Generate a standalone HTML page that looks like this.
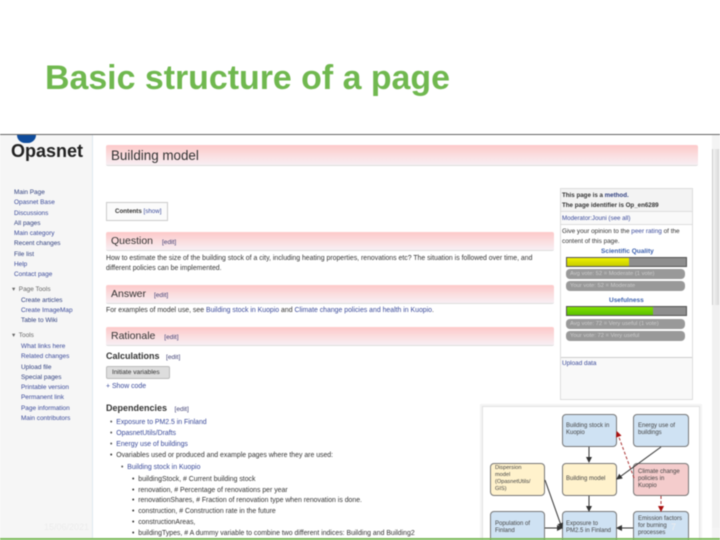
<!DOCTYPE html>
<html><head><meta charset="utf-8"><style>
html,body{margin:0;padding:0;background:#fff;}
#p{position:relative;width:720px;height:540px;overflow:hidden;background:#fff;font-family:"Liberation Sans",sans-serif;}
#p div,#p svg{position:absolute;}
#c{left:0;top:0;width:720px;height:540px;filter:blur(.4px);}
.t{white-space:nowrap;font-size:6.9px;line-height:9px;color:#333;}
.n{font-size:6.45px;}
.l{color:#3a4a9a;}
.s{color:#2f3f7f;}
.h{left:106px;width:448px;height:18px;background:linear-gradient(#fdc9c9,#f8f0f4);border-radius:2px;border-bottom:1px solid #ddd;}
.h2{font-size:10.5px;line-height:12px;color:#333;}
.e{font-size:6.6px;color:#447;margin-left:5px;}
.b{background:#cfe2f3;border:1px solid #777;border-radius:4px;box-sizing:border-box;}
.y{background:#fff2cc;}
.r{background:#f4cccc;}
.d{font-size:6px;line-height:7px;color:#444;white-space:nowrap;}
.pl{background:#999;border-radius:4px;height:10px;left:566px;width:119px;color:#ccc;font-size:5.8px;line-height:10px;text-indent:4px;white-space:nowrap;}
</style></head><body><div id="p"><div id="c">
<div style="left:45px;top:58px;font-size:33.9px;font-weight:bold;line-height:40px;color:#70b84f;white-space:nowrap;">Basic structure of a page</div>

<div style="left:0;top:134px;width:720px;height:1px;background:#666;"></div>
<div style="left:0;top:135px;width:92px;height:403px;background:#f6f6f6;border-right:1px solid #dfe8f0;"></div>
<div style="left:17px;top:135px;width:19px;height:8px;background:#0f4c9c;border-radius:0 0 10px 10px;"></div>
<div style="left:11px;top:141px;font-size:18px;line-height:20px;font-weight:bold;color:#222;white-space:nowrap;">Opasnet</div>

<div class="t n s" style="left:14px;top:188px;">Main Page</div>
<div class="t n l" style="left:14px;top:198px;">Opasnet Base</div>
<div class="t n l" style="left:14px;top:209px;">Discussions</div>
<div class="t n s" style="left:14px;top:219px;">All pages</div>
<div class="t n l" style="left:14px;top:229px;">Main category</div>
<div class="t n s" style="left:14px;top:239px;">Recent changes</div>
<div class="t n s" style="left:14px;top:250px;">File list</div>
<div class="t n l" style="left:14px;top:260px;">Help</div>
<div class="t n l" style="left:14px;top:270px;">Contact page</div>
<div class="t n" style="left:12px;top:285px;color:#666;">&#9662; &nbsp;Page Tools</div>
<div class="t n s" style="left:21px;top:296px;">Create articles</div>
<div class="t n l" style="left:21px;top:306px;">Create ImageMap</div>
<div class="t n s" style="left:21px;top:316px;">Table to Wiki</div>
<div class="t n" style="left:12px;top:331px;color:#666;">&#9662; &nbsp;Tools</div>
<div class="t n l" style="left:21px;top:342px;">What links here</div>
<div class="t n l" style="left:21px;top:352px;">Related changes</div>
<div class="t n s" style="left:21px;top:363px;">Upload file</div>
<div class="t n s" style="left:21px;top:373px;">Special pages</div>
<div class="t n l" style="left:21px;top:383px;">Printable version</div>
<div class="t n l" style="left:21px;top:393px;">Permanent link</div>
<div class="t n l" style="left:21px;top:404px;">Page information</div>
<div class="t n l" style="left:21px;top:414px;">Main contributors</div>
<div class="t" style="left:44px;top:523px;font-size:9px;color:#ececec;">15/06/2021</div>

<div class="h" style="top:145px;width:592px;height:20px;"></div>
<div class="t" style="left:111px;top:148px;font-size:13.4px;line-height:15px;color:#333;">Building model</div>

<div style="left:106px;top:202px;width:60px;height:17px;border:1px solid #ccc;background:#fbfbfb;"></div>
<div class="t" style="left:115px;top:207px;font-size:6.2px;"><b>Contents</b> <span class="l">[show]</span></div>

<div class="h" style="top:232px;"></div>
<div class="t h2" style="left:111px;top:235px;">Question <span class="e" style="margin-left:6px;">[edit]</span></div>
<div class="t" style="left:106px;top:254px;">How to estimate the size of the building stock of a city, including heating properties, renovations etc? The situation is followed over time, and</div>
<div class="t" style="left:106px;top:264px;">different policies can be implemented.</div>

<div class="h" style="top:285px;"></div>
<div class="t h2" style="left:111px;top:288px;">Answer <span class="e" style="margin-left:5px;">[edit]</span></div>
<div class="t" style="left:106px;top:306px;">For examples of model use, see <span class="l">Building stock in Kuopio</span> and <span class="l">Climate change policies and health in Kuopio</span>.</div>

<div class="h" style="top:327px;"></div>
<div class="t h2" style="left:111px;top:330px;">Rationale <span class="e" style="margin-left:6px;">[edit]</span></div>

<div class="t" style="left:106px;top:351px;font-size:9px;line-height:11px;font-weight:bold;">Calculations <span class="e" style="font-weight:normal;margin-left:4px;">[edit]</span></div>
<div style="left:106px;top:366px;width:62px;height:11px;background:#ddd;border:1px solid #bbb;border-radius:2px;"></div>
<div class="t" style="left:112px;top:368px;font-size:6.6px;">Initiate variables</div>
<div class="t l" style="left:106px;top:382px;">+ Show code</div>

<div class="t" style="left:106px;top:403px;font-size:9px;line-height:11px;font-weight:bold;">Dependencies <span class="e" style="font-weight:normal;margin-left:5px;">[edit]</span></div>
<div class="t l" style="left:110px;top:418px;"><span style="color:#555">&#8226;</span>&nbsp;&nbsp;Exposure to PM2.5 in Finland</div>
<div class="t l" style="left:110px;top:429px;"><span style="color:#555">&#8226;</span>&nbsp;&nbsp;OpasnetUtils/Drafts</div>
<div class="t l" style="left:110px;top:440px;"><span style="color:#555">&#8226;</span>&nbsp;&nbsp;Energy use of buildings</div>
<div class="t" style="left:110px;top:451px;">&#8226;&nbsp;&nbsp;Ovariables used or produced and example pages where they are used:</div>
<div class="t l" style="left:121px;top:463px;"><span style="color:#555">&#8226;</span>&nbsp;&nbsp;Building stock in Kuopio</div>
<div class="t" style="left:132px;top:475px;">&#8226;&nbsp;&nbsp;buildingStock, # Current building stock</div>
<div class="t" style="left:132px;top:486px;">&#8226;&nbsp;&nbsp;renovation, # Percentage of renovations per year</div>
<div class="t" style="left:132px;top:496px;">&#8226;&nbsp;&nbsp;renovationShares, # Fraction of renovation type when renovation is done.</div>
<div class="t" style="left:132px;top:507px;">&#8226;&nbsp;&nbsp;construction, # Construction rate in the future</div>
<div class="t" style="left:132px;top:518px;">&#8226;&nbsp;&nbsp;constructionAreas,</div>
<div class="t" style="left:132px;top:529px;">&#8226;&nbsp;&nbsp;buildingTypes, # A dummy variable to combine two different indices: Building and Building2</div>

<!-- infobox -->
<div style="left:560px;top:188px;width:131px;height:210px;background:#f9f9f9;border:1px solid #ddd;"></div>
<div style="left:561px;top:189px;width:131px;height:22px;background:#f3f3f3;border-bottom:1px solid #ddd;"></div>
<div style="left:561px;top:224px;width:131px;height:133px;background:#fff;border-top:1px solid #ddd;"></div>
<div style="left:561px;top:357px;width:131px;height:1px;background:#ccc;"></div>
<div class="t" style="left:562px;top:191px;font-size:6.2px;font-weight:bold;line-height:10px;">This page is a <span class="s">method.</span><br>The page identifier is Op_en6289</div>
<div class="t l" style="left:562px;top:214px;font-size:6.2px;">Moderator:Jouni (see all)</div>
<div class="t" style="left:562px;top:227px;font-size:6.4px;line-height:10px;">Give your opinion to the <span class="l">peer rating</span> of the<br>content of this page.</div>
<div class="t" style="left:601px;top:247px;font-size:6.5px;font-weight:bold;color:#3a5fae;">Scientific Quality</div>
<div style="left:566px;top:257px;width:119px;height:8px;background:#8e8e8e;border:1px solid #555;"></div>
<div style="left:567px;top:258px;width:62px;height:8px;background:linear-gradient(#eef200,#c8cc00);"></div>
<div class="pl" style="top:269px;">Avg vote: 52 = Moderate (1 vote)</div>
<div class="pl" style="top:281px;">Your vote: 52 = Moderate</div>
<div class="t" style="left:609px;top:296px;font-size:6.5px;font-weight:bold;color:#3a5fae;">Usefulness</div>
<div style="left:566px;top:306px;width:119px;height:8px;background:#8e8e8e;border:1px solid #555;"></div>
<div style="left:567px;top:307px;width:86px;height:8px;background:linear-gradient(#7fe000,#5cc000);"></div>
<div class="pl" style="top:319px;">Avg vote: 72 = Very useful (1 vote)</div>
<div class="pl" style="top:331px;">Your vote: 72 = Very useful</div>
<div class="t l" style="left:562px;top:359px;font-size:6.4px;">Upload data</div>

<!-- scrollbar -->
<div style="left:712px;top:135px;width:8px;height:405px;background:#f1f1f1;"></div>
<div style="left:712px;top:149px;width:7px;height:156px;background:linear-gradient(90deg,#f4f4f4,#d8d8d8);border-left:1px solid #ccc;box-sizing:border-box;"></div>
<div style="left:712px;top:135px;width:8px;height:14px;background:#f4f4f4;"></div>
<div style="left:712px;top:528px;width:8px;height:10px;background:#f4f4f4;"></div>

<!-- diagram -->
<div style="left:482px;top:406px;width:216px;height:134px;background:#fff;border:1px solid #e2e2e2;box-shadow:0 0 0 2px #f4f4f4;"></div>
<div class="b" style="left:562px;top:414px;width:55px;height:33px;"></div>
<div class="d" style="left:566px;top:423px;">Building stock in<br>Kuopio</div>
<div class="b" style="left:633px;top:414px;width:56px;height:33px;"></div>
<div class="d" style="left:638px;top:423px;">Energy use of<br>buildings</div>
<div class="b y" style="left:490px;top:463px;width:55px;height:33px;"></div>
<div class="d" style="left:495px;top:465px;font-size:5.6px;">Dispersion<br>model<br>(OpasnetUtils/<br>GIS)</div>
<div class="b y" style="left:562px;top:463px;width:55px;height:33px;"></div>
<div class="d" style="left:566px;top:476px;">Building model</div>
<div class="b r" style="left:633px;top:463px;width:56px;height:33px;"></div>
<div class="d" style="left:638px;top:469px;">Climate change<br>policies in<br>Kuopio</div>
<div class="b" style="left:490px;top:511px;width:55px;height:33px;"></div>
<div class="d" style="left:495px;top:521px;">Population of<br>Finland</div>
<div class="b" style="left:562px;top:511px;width:55px;height:33px;"></div>
<div class="d" style="left:566px;top:521px;">Exposure to<br>PM2.5 in Finland</div>
<div class="b" style="left:633px;top:511px;width:56px;height:33px;"></div>
<div class="d" style="left:638px;top:516px;">Emission factors<br>for burning<br>processes</div>
<svg style="left:470px;top:400px;" width="250" height="140" viewBox="0 0 250 140">
<defs>
<marker id="a" markerWidth="6" markerHeight="6" refX="5" refY="3" orient="auto"><path d="M0 0L6 3L0 6z" fill="#333"/></marker>
<marker id="m" markerWidth="6" markerHeight="6" refX="5" refY="3" orient="auto"><path d="M0 0L6 3L0 6z" fill="#a11"/></marker>
</defs>
<g stroke="#333" stroke-width="1" fill="none">
<path d="M119 47V62" marker-end="url(#a)"/>
<path d="M191 47L147 79" marker-end="url(#a)"/>
<path d="M119 96V111" marker-end="url(#a)"/>
<path d="M75 80L92 128" marker-end="url(#a)"/>
<path d="M75 128H92" marker-end="url(#a)"/>
<path d="M163 128H147" marker-end="url(#a)"/>
</g>
<g stroke="#a33" stroke-width="1" stroke-dasharray="3 2" fill="none">
<path d="M164 78L147 32" marker-end="url(#m)"/>
<path d="M191 96V111" marker-end="url(#m)"/>
</g>
</svg>
<div class="t" style="left:671px;top:523px;font-size:9px;color:#eee;">7</div>

<div style="left:0;top:538px;width:720px;height:2px;background:#7dbb5c;"></div>
</div></div></body></html>
